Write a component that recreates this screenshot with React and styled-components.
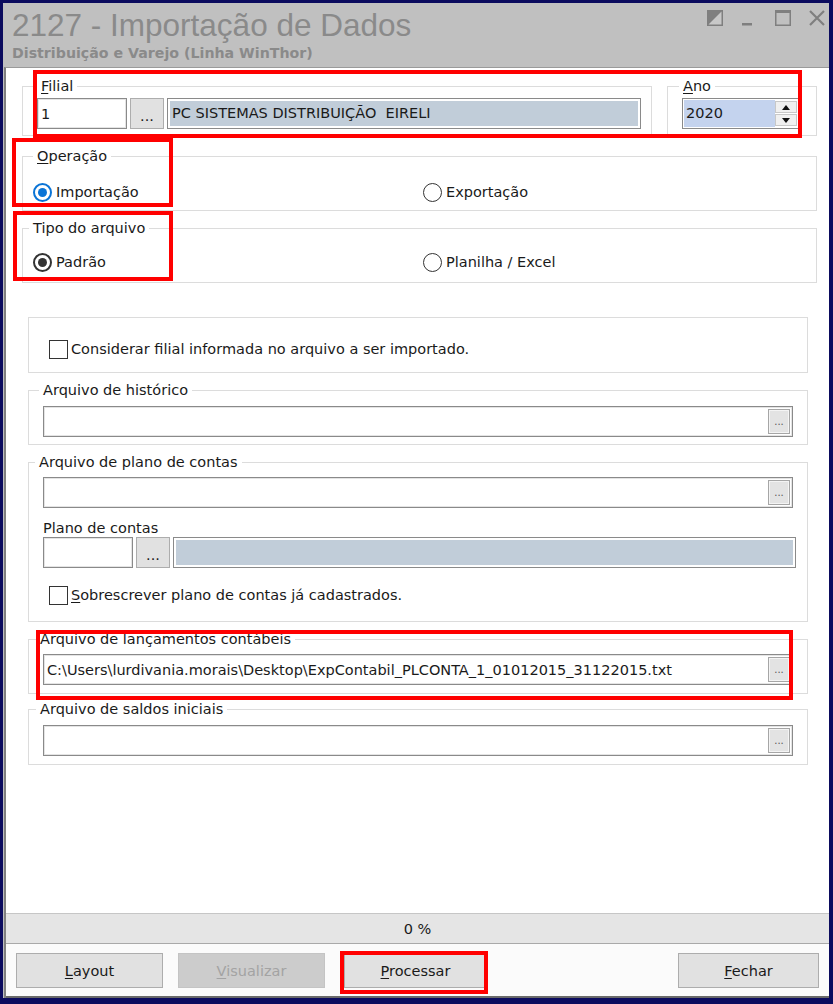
import React from "react";
import styled, { createGlobalStyle } from "styled-components";

const GlobalStyle = createGlobalStyle`
  html, body { margin: 0; padding: 0; background: #0b0b5e; }
  body { font-family: "DejaVu Sans", "Liberation Sans", sans-serif; color: #1a1a1a; font-size: 14.5px; }
  * { box-sizing: border-box; }
`;

const Window = styled.div`
  position: relative;
  width: 833px;
  height: 1004px;
  background: #0b0b5e;
  padding: 3px 4px 6px 3px;
  display: flex;
`;

const Frame = styled.div`
  flex: 1;
  display: flex;
  flex-direction: column;
  background: #c0c0c0;
`;

const TitleBar = styled.div`
  height: 64px;
  flex-shrink: 0;
  display: flex;
  justify-content: space-between;
  padding: 5px 4px 0 9px;
`;

const Title = styled.div`
  font-family: "Liberation Sans", Arial, sans-serif;
  font-size: 31.5px;
  line-height: 34px;
  color: #8a8a8a;
`;

const Subtitle = styled.div`
  margin-top: 3px;
  font-size: 14.2px;
  line-height: 16px;
  font-weight: bold;
  color: #8a8a8a;
`;

const Controls = styled.div`
  display: flex;
  gap: 18px;
  margin-top: 2px;
  height: 16px;
`;

const Client = styled.div`
  flex: 1;
  display: flex;
  flex-direction: column;
  margin-left: 1px;
  border-left: 2px solid #808080;
  border-top: 1px solid #9a9a9a;
  background: #fff;
`;

const Content = styled.div`
  flex: 1;
  padding: 10px 12px 0 16px;
  display: flex;
  flex-direction: column;
`;

const Row = styled.div`
  display: flex;
  align-items: center;
  gap: ${(p) => p.$gap || 0}px;
  margin-top: ${(p) => p.$mt || 0}px;
`;

const Group = styled.fieldset`
  margin: ${(p) => p.$mt || 0}px 0 0 0;
  border: 1px solid #dcdcdc;
  padding: ${(p) => p.$pad};
  min-width: 0;
  flex: ${(p) => (p.$grow ? "1 1 0" : p.$w ? `0 0 ${p.$w}px` : "0 0 auto")};
`;

const Panel = styled.div`
  margin-top: ${(p) => p.$mt || 0}px;
  border: 1px solid #dcdcdc;
  padding: 21px 0 13px 20px;
`;

const Legend = styled.legend`
  padding: 0 4px;
  margin-left: ${(p) => p.$offset || 0}px;
  line-height: 16px;
`;

const Label = styled.div`
  margin-top: ${(p) => p.$mt || 0}px;
  line-height: 16px;
`;

const U = styled.span`
  text-decoration: underline;
  text-underline-offset: 2px;
`;

const Lower = styled.div`
  margin: 0 9px 0 6px;
  display: flex;
  flex-direction: column;
`;

const Field = styled.div`
  height: 31px;
  width: ${(p) => (p.$w ? `${p.$w}px` : "auto")};
  flex: ${(p) => (p.$w ? "0 0 auto" : "1")};
  border: 1px solid #8a8a8a;
  box-shadow: inset 0 0 0 1px #e4e4e4;
  background: #fff;
  display: flex;
  align-items: center;
  justify-content: space-between;
  padding: 0 2px 0 3px;
  white-space: nowrap;
  overflow: hidden;
`;

const Readonly = styled.div`
  flex: 1;
  height: 31px;
  margin-right: ${(p) => p.$mr || 0}px;
  border: 1px solid #8a8a8a;
  padding: 2px;
  background: #fff;
  display: flex;
`;

const ReadonlyFill = styled.div`
  flex: 1;
  background: #c1cdd9;
  line-height: 25px;
  padding-left: 2px;
  white-space: nowrap;
`;

const DotsButton = styled.div`
  width: 34px;
  height: 31px;
  flex-shrink: 0;
  border: 1px solid #adadad;
  background: #e1e1e1;
  display: flex;
  align-items: center;
  justify-content: center;
  padding-top: 4px;
`;

const InnerButton = styled.div`
  width: 22px;
  height: 25px;
  border: 1px solid #a6a6a6;
  box-shadow: inset 0 0 0 1px #f4f4f4;
  background: #e3e3e3;
  font-size: 10px;
  color: #555;
  display: flex;
  align-items: center;
  justify-content: center;
`;

const Spin = styled.div`
  height: 31px;
  border: 1px solid #8a8a8a;
  padding: 1px;
  background: #fff;
  display: flex;
`;

const SpinValue = styled.div`
  flex: 1;
  background: #c4d3ee;
  line-height: 27px;
  padding-left: 2px;
`;

const SpinButtons = styled.div`
  width: 22px;
  display: flex;
  flex-direction: column;
  gap: 1px;
  padding: 1px 0;
`;

const SpinBtn = styled.div`
  flex: 1;
  border: 1px solid #c8c8c8;
  background: #f0f0f0;
  display: flex;
  align-items: center;
  justify-content: center;
`;

const Option = styled.label`
  display: flex;
  align-items: center;
  height: 20px;
  width: ${(p) => (p.$w ? `${p.$w}px` : "auto")};
  padding-left: ${(p) => p.$pl || 0}px;
  gap: 4px;
`;

const Radio = styled.span`
  width: 19px;
  height: 19px;
  flex-shrink: 0;
  border-radius: 50%;
  border: ${(p) => (p.$checked ? 2 : 1.3)}px solid ${(p) => p.$color || "#333"};
  display: inline-flex;
  align-items: center;
  justify-content: center;
  background: #fff;
  &::after {
    content: "";
    width: 9px;
    height: 9px;
    border-radius: 50%;
    background: ${(p) => (p.$checked ? p.$color : "transparent")};
  }
`;

const Check = styled.span`
  width: 19px;
  height: 19px;
  flex-shrink: 0;
  border: 1px solid #333;
  background: #fff;
  margin-right: -1px;
`;

const Progress = styled.div`
  height: 31px;
  flex-shrink: 0;
  background: #e5e5e5;
  border-top: 1px solid #c6c6c6;
  border-bottom: 1px solid #a9a9a9;
  display: flex;
  align-items: center;
  justify-content: center;
`;

const ButtonBar = styled.div`
  height: 54px;
  flex-shrink: 0;
  display: flex;
  align-items: flex-start;
  padding: 9px 10px 0 10px;
  background: #fbfbfb;
  border-bottom: 2px solid #6a6a6a;
`;

const Button = styled.div`
  width: ${(p) => p.$w}px;
  height: 35px;
  margin-left: ${(p) => p.$ml || 0}px;
  border: 1px solid ${(p) => (p.$disabled ? "#c4c4c4" : "#adadad")};
  background: ${(p) => (p.$disabled ? "#cccccc" : "#e1e1e1")};
  color: ${(p) => (p.$disabled ? "#a3a3a3" : "#1a1a1a")};
  display: flex;
  align-items: center;
  justify-content: center;
`;

const Spacer = styled.div`
  flex: 1;
`;

const Highlight = styled.div`
  position: absolute;
  left: ${(p) => p.$x}px;
  top: ${(p) => p.$y}px;
  width: ${(p) => p.$w}px;
  height: ${(p) => p.$h}px;
  border: 4px solid #ff0000;
  pointer-events: none;
`;

const Icon = ({ children }) => (
  <svg width="16" height="16" viewBox="0 0 16 16">
    {children}
  </svg>
);

const FileField = ({ value }) => (
  <Field>
    <span>{value}</span>
    <InnerButton>...</InnerButton>
  </Field>
);

export default function App() {
  return (
    <Window>
      <GlobalStyle />
      <Frame>
        <TitleBar>
          <div>
            <Title>2127 - Importação de Dados</Title>
            <Subtitle>Distribuição e Varejo (Linha WinThor)</Subtitle>
          </div>
          <Controls>
            <Icon>
              <rect x="0.75" y="0.75" width="14.5" height="14.5" fill="#c8c8c8" stroke="#7f7f7f" strokeWidth="1.5" />
              <polygon points="0,0 16,0 0,16" fill="#7f7f7f" />
            </Icon>
            <Icon>
              <rect x="1" y="13" width="10" height="2.5" fill="#7f7f7f" />
            </Icon>
            <Icon>
              <rect x="0.75" y="0.75" width="14.5" height="14.5" fill="none" stroke="#7f7f7f" strokeWidth="1.5" />
              <rect x="0" y="0" width="16" height="3" fill="#7f7f7f" />
            </Icon>
            <Icon>
              <path d="M1 1 L15 15 M15 1 L1 15" stroke="#7f7f7f" strokeWidth="2.2" />
            </Icon>
          </Controls>
        </TitleBar>

        <Client>
          <Content>
            <Row $gap={15}>
              <Group $grow $pad="4px 10px 6px 14px">
                <Legend $offset={0}>
                  <U>F</U>ilial
                </Legend>
                <Row $gap={3}>
                  <Field $w={90}>1</Field>
                  <DotsButton>...</DotsButton>
                  <Readonly>
                    <ReadonlyFill>PC SISTEMAS DISTRIBUIÇÃO&nbsp; EIRELI</ReadonlyFill>
                  </Readonly>
                </Row>
              </Group>
              <Group $w={150} $pad="4px 17px 6px 14px">
                <Legend $offset={-3}>
                  <U>A</U>no
                </Legend>
                <Spin>
                  <SpinValue>2020</SpinValue>
                  <SpinButtons>
                    <SpinBtn>
                      <svg width="8" height="5" viewBox="0 0 8 5">
                        <polygon points="0,5 8,5 4,0" fill="#111" />
                      </svg>
                    </SpinBtn>
                    <SpinBtn>
                      <svg width="8" height="5" viewBox="0 0 8 5">
                        <polygon points="0,0 8,0 4,5" fill="#111" />
                      </svg>
                    </SpinBtn>
                  </SpinButtons>
                </Spin>
              </Group>
            </Row>

            <Group $mt={12} $pad="18px 0 8px 10px">
              <Legend $offset={0}>
                <U>O</U>peração
              </Legend>
              <Row>
                <Option $w={390}>
                  <Radio $checked $color="#0a74d6" />
                  Importação
                </Option>
                <Option>
                  <Radio />
                  Exportação
                </Option>
              </Row>
            </Group>

            <Group $mt={9} $pad="16px 0 10px 10px">
              <Legend $offset={-4}>Tipo do arquivo</Legend>
              <Row>
                <Option $w={390}>
                  <Radio $checked $color="#333" />
                  Padrão
                </Option>
                <Option>
                  <Radio />
                  Planilha / Excel
                </Option>
              </Row>
            </Group>

            <Lower>
              <Panel $mt={34}>
                <Option>
                  <Check />
                  Considerar filial informada no arquivo a ser importado.
                </Option>
              </Panel>

              <Group $mt={9} $pad="8px 14px 7px 14px">
                <Legend $offset={-4}>Arquivo de histórico</Legend>
                <FileField value="" />
              </Group>

              <Group $mt={9} $pad="7px 14px 16px 14px">
                <Legend $offset={-8}>Arquivo de plano de contas</Legend>
                <FileField value="" />
                <Label $mt={12}>Plano de contas</Label>
                <Row $gap={3} $mt={1}>
                  <Field $w={90} />
                  <DotsButton>...</DotsButton>
                  <Readonly $mr={-3}>
                    <ReadonlyFill />
                  </Readonly>
                </Row>
                <Row $mt={17}>
                  <Option $pl={6}>
                    <Check />
                    <span>
                      <U>S</U>obrescrever plano de contas já cadastrados.
                    </span>
                  </Option>
                </Row>
              </Group>

              <Group $mt={9} $pad="7px 14px 8px 14px">
                <Legend $offset={-7}>Arquivo de lançamentos contábeis</Legend>
                <FileField value="C:\Users\lurdivania.morais\Desktop\ExpContabil_PLCONTA_1_01012015_31122015.txt" />
              </Group>

              <Group $mt={7} $pad="8px 14px 8px 14px">
                <Legend $offset={-7}>Arquivo de saldos iniciais</Legend>
                <FileField value="" />
              </Group>
            </Lower>
          </Content>

          <Progress>0 %</Progress>

          <ButtonBar>
            <Button $w={147}>
              <span>
                <U>L</U>ayout
              </span>
            </Button>
            <Button $w={147} $ml={15} $disabled>
              <span>
                <U>V</U>isualizar
              </span>
            </Button>
            <Button $w={143} $ml={19}>
              <span>
                <U>P</U>rocessar
              </span>
            </Button>
            <Spacer />
            <Button $w={141}>
              <span>
                <U>F</U>echar
              </span>
            </Button>
          </ButtonBar>
        </Client>
      </Frame>

      <Highlight $x={33} $y={70} $w={769} $h={68} />
      <Highlight $x={12} $y={138} $w={161} $h={69} />
      <Highlight $x={13} $y={211} $w={160} $h={70} />
      <Highlight $x={36} $y={630} $w={757} $h={70} />
      <Highlight $x={340} $y={951} $w={148} $h={43} />
    </Window>
  );
}
